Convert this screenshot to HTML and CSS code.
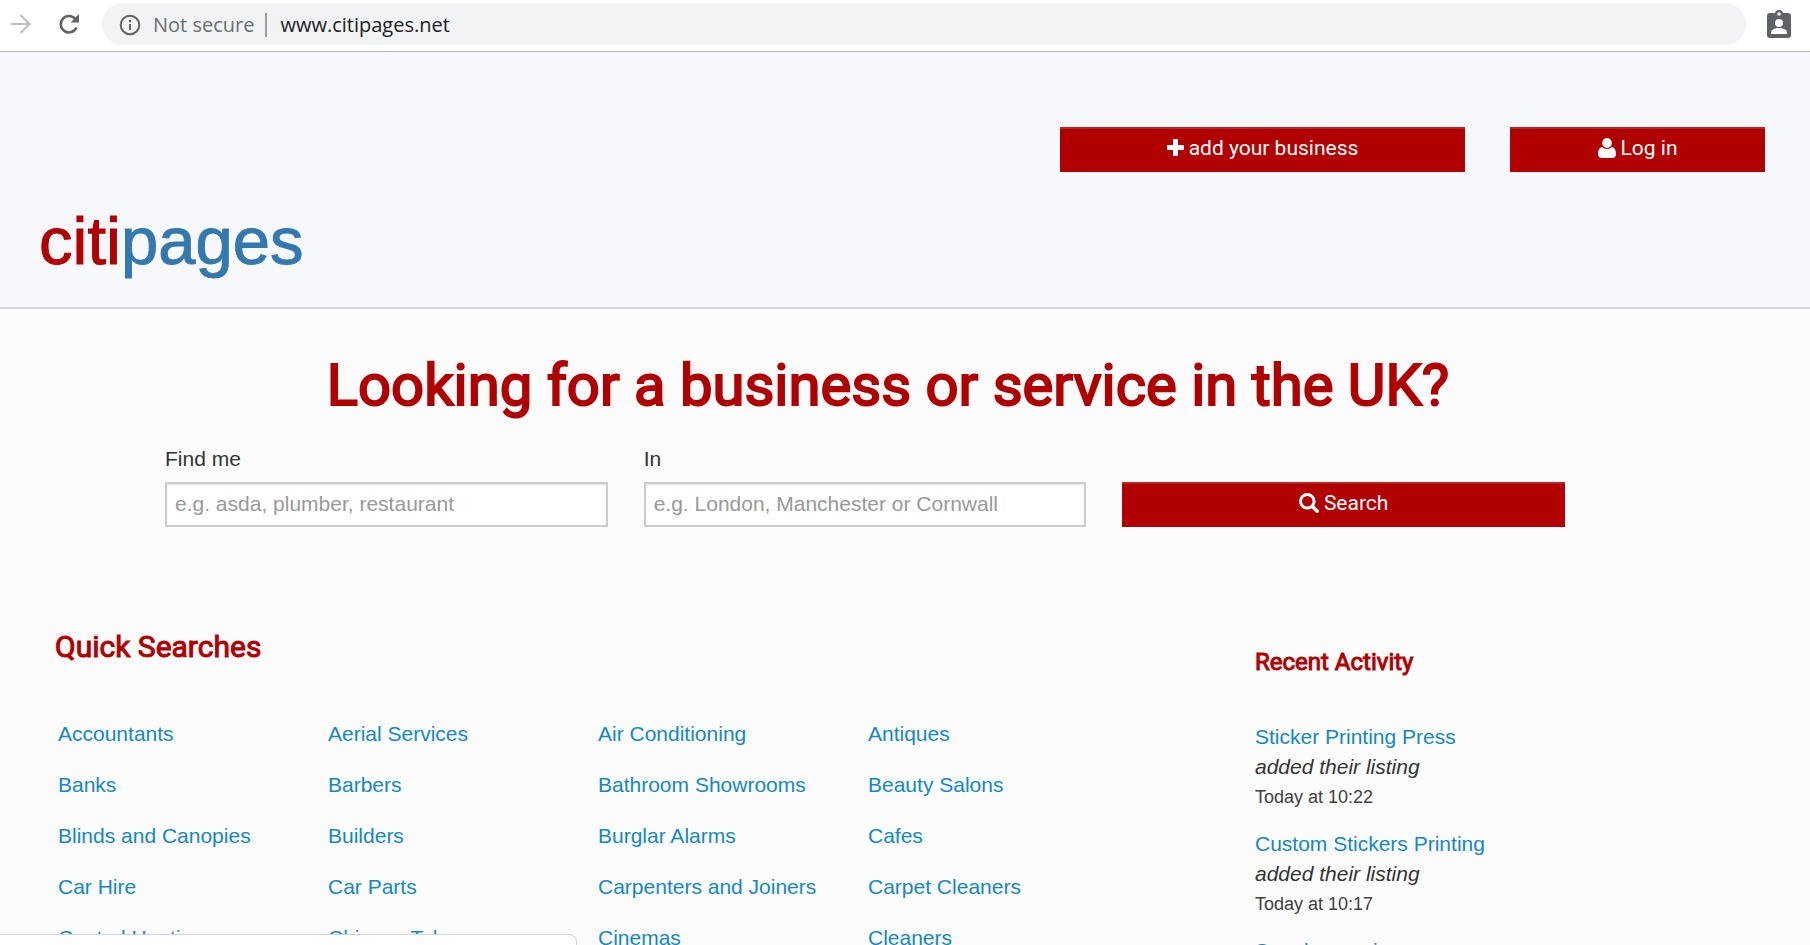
FILE: index.html
```html
<!DOCTYPE html>
<html lang="en">
<head>
  <meta charset="UTF-8" />
  <meta name="viewport" content="width=device-width, initial-scale=1" />
  <title>citipages</title>
  <link rel="stylesheet" href="styles.css">
</head>
<body>

<div class="toolbar">
  <button class="tool forward" aria-label="Forward" disabled>
    <svg width="20" height="20" viewBox="0 0 20 20" fill="none" stroke="#bcbdbf" stroke-width="2"><path d="M0 10h18M9.500 1l9 9-9 9"/></svg>
  </button>
  <button class="tool reload" aria-label="Reload">
    <svg width="22" height="22" viewBox="0 0 22 22"><path d="M18.500 14.500A8.200 8.200 0 1 1 17.300 6" fill="none" stroke="#5f6368" stroke-width="2.500"/><path d="M21 1v8.500h-8.500z" fill="#5f6368"/></svg>
  </button>
  <div class="address">
    <svg width="22" height="22" viewBox="0 0 22 22" fill="none" stroke="#5f6368" stroke-width="2"><circle cx="11" cy="11" r="9.300"/><path d="M11 10v6M11 6v2.200"/></svg>
    <span class="secure">Not secure</span>
    <input class="url" type="text" aria-label="Address" value="www.citipages.net">
  </div>
  <button class="tool profile" aria-label="Profile">
    <svg width="24" height="28" viewBox="0 0 24 28"><rect x="0" y="3" width="24" height="25" rx="3" fill="#5f6368"/><circle cx="12" cy="4" r="4" fill="#5f6368"/><circle cx="12" cy="4" r="1.800" fill="#fff"/><circle cx="12" cy="13" r="4" fill="#fff"/><path d="M4 24v-1.500c0-3 4-4.500 8-4.500s8 1.500 8 4.500V24z" fill="#fff"/></svg>
  </button>
</div>

<header class="header">
  <div class="actions">
    <button class="btn add">
      <svg width="17" height="17" viewBox="0 0 17 17"><path d="M6 1q0-1 1-1h3q1 0 1 1v5h5q1 0 1 1v3q0 1-1 1h-5v5q0 1-1 1H7q-1 0-1-1v-5H1q-1 0-1-1V7q0-1 1-1h5z" fill="#fff"/></svg>
      add your business
    </button>
    <button class="btn login">
      <svg width="18" height="20" viewBox="0 0 18 20" fill="#fff"><ellipse cx="9" cy="5" rx="4.800" ry="5"/><path d="M4 9C1 9.500 0 13 0 16c0 2.500 1.500 4 4 4h10c2.500 0 4-1.500 4-4 0-3-1-6.500-4-7-2.500 2.500-7.500 2.500-10 0z"/></svg>
      Log in
    </button>
  </div>
  <a class="logo" href="#"><span class="red">citi</span>pages</a>
</header>

<main>
  <h1>Looking for a business or service in the UK?</h1>
  <form class="search">
    <div class="field">
      <label for="what">Find me</label>
      <input id="what" type="text" placeholder="e.g. asda, plumber, restaurant">
    </div>
    <div class="field">
      <label for="where">In</label>
      <input id="where" type="text" placeholder="e.g. London, Manchester or Cornwall">
    </div>
    <button class="btn" type="button">
      <svg width="20" height="20" viewBox="0 0 20 20" fill="none" stroke="#fff"><circle cx="8.300" cy="8.300" r="6.800" stroke-width="3"/><path d="M13.500 13.500l4.700 4.700" stroke-width="3.600" stroke-linecap="round"/></svg>
      Search
    </button>
  </form>

  <div class="columns">
    <section class="quick">
      <h2>Quick Searches</h2>
      <ul>
        <li><a href="#">Accountants</a></li>
        <li><a href="#">Aerial Services</a></li>
        <li><a href="#">Air Conditioning</a></li>
        <li><a href="#">Antiques</a></li>
        <li><a href="#">Banks</a></li>
        <li><a href="#">Barbers</a></li>
        <li><a href="#">Bathroom Showrooms</a></li>
        <li><a href="#">Beauty Salons</a></li>
        <li><a href="#">Blinds and Canopies</a></li>
        <li><a href="#">Builders</a></li>
        <li><a href="#">Burglar Alarms</a></li>
        <li><a href="#">Cafes</a></li>
        <li><a href="#">Car Hire</a></li>
        <li><a href="#">Car Parts</a></li>
        <li><a href="#">Carpenters and Joiners</a></li>
        <li><a href="#">Carpet Cleaners</a></li>
        <li><a href="#">Central Heating</a></li>
        <li><a href="#">Chinese Takeaway</a></li>
        <li><a href="#">Cinemas</a></li>
        <li><a href="#">Cleaners</a></li>
      </ul>
    </section>
    <section class="recent">
      <h3>Recent Activity</h3>
      <p><a href="#">Sticker Printing Press</a><em>added their listing</em><small>Today at 10:22</small></p>
      <p><a href="#">Custom Stickers Printing</a><em>added their listing</em><small>Today at 10:17</small></p>
      <p><a href="#">Speakers unique</a></p>
    </section>
  </div>
</main>

<div class="status"></div>

</body>
</html>
```
FILE: styles.css
```css
* {
  box-sizing: border-box;
}
body {
  margin: 0;
  height: 100vh;
  overflow: hidden;
  background: #fcfcfc;
  color: #333;
  font-family: "Liberation Sans", Arial, sans-serif;
  font-size: 21px;
  line-height: 30px;
}
a {
  color: #1488c6;
  text-decoration: none;
}
svg {
  flex: none;
}
button {
  cursor: pointer;
}

/* browser bar */
.toolbar {
  display: flex;
  align-items: center;
  height: 52px;
  padding: 0 19px 4px 11px;
  background: #fff;
  border-bottom: 1px solid #b4b4b6;
}
.tool {
  display: flex;
  padding: 0;
  border: 0;
  background: none;
}
.reload {
  margin: 0 22px 0 27px;
}
.address {
  flex: 1;
  display: flex;
  align-items: center;
  height: 42px;
  padding: 2px 17px 0;
  border-radius: 21px;
  background: #f1f3f4;
  font-family: "Open Sans", "Noto Sans", sans-serif;
  font-size: 20px;
}
.secure {
  margin-left: 12px;
  padding-right: 11px;
  border-right: 2px solid #9a9da0;
  color: #6a6e72;
  line-height: 24px;
}
.url {
  flex: 1;
  padding: 0 0 0 13px;
  border: 0;
  background: none;
  color: #202124;
  font: inherit;
}
.profile {
  margin-left: 21px;
}

/* header */
.header {
  padding: 75px 45px 26px 39px;
  background: #f7f8fc;
  border-bottom: 2px solid #d3d3da;
}
.actions {
  display: flex;
  justify-content: flex-end;
  gap: 45px;
}
.btn {
  display: flex;
  align-items: center;
  justify-content: center;
  gap: 5px;
  height: 45px;
  padding: 0 0 4px;
  border: 0;
  border-radius: 0;
  background: #b00000;
  box-shadow: inset 0 2px 0 #b92626;
  color: #fff;
  font-family: Roboto, sans-serif;
  font-size: 21px;
}
.add {
  width: 405px;
}
.login {
  width: 255px;
}
.logo {
  display: block;
  width: fit-content;
  margin-top: 29px;
  color: #3379b0;
  font-size: 67px;
  line-height: 80px;
  -webkit-text-stroke: 1px;
}
.red {
  color: #b00000;
}

/* search */
h1, h2, h3 {
  margin: 0;
  color: #b00000;
  font-family: Roboto, sans-serif;
  font-weight: 400;
  -webkit-text-stroke: 1px;
}
h1 {
  padding: 41px 34px 0 0;
  font-size: 58px;
  line-height: 70px;
  text-align: center;
  -webkit-text-stroke: 2px;
}
.search {
  display: grid;
  grid-template-columns: repeat(3, 1fr);
  align-items: end;
  gap: 36px;
  margin: 24px 245px 0 165px;
}
.field label {
  display: block;
  margin-bottom: 8px;
}
.field input {
  display: block;
  width: 100%;
  height: 45px;
  padding: 0 8px 2px;
  border: 2px solid #ccc;
  background: #fff;
  box-shadow: inset 0 1px 2px rgba(0, 0, 0, 0.1);
  font: inherit;
}
.field input::placeholder {
  color: #999;
  opacity: 1;
}

/* lists */
.columns {
  display: flex;
  padding: 100px 45px 0 55px;
}
.quick {
  flex: 1;
}
h2 {
  font-size: 30px;
  line-height: 40px;
}
.quick ul {
  display: grid;
  grid-template-columns: repeat(4, 270px);
  margin: 41px 0 0;
  padding: 0 0 0 3px;
  list-style: none;
}
.quick li {
  line-height: 51px;
}
.recent {
  width: 510px;
  padding-top: 18px;
}
h3 {
  margin-bottom: 43px;
  font-size: 24px;
  line-height: 34px;
}
.recent p {
  margin: 0 0 17px;
}
.recent a, .recent em, .recent small {
  display: block;
}
.recent small {
  color: #404040;
  font-size: 18px;
}

.status {
  position: absolute;
  left: 0;
  bottom: 0;
  width: 577px;
  height: 11px;
  border: 1px solid #d5d5d7;
  border-width: 1px 1px 0 0;
  border-radius: 0 8px 0 0;
  background: #fff;
}
```
